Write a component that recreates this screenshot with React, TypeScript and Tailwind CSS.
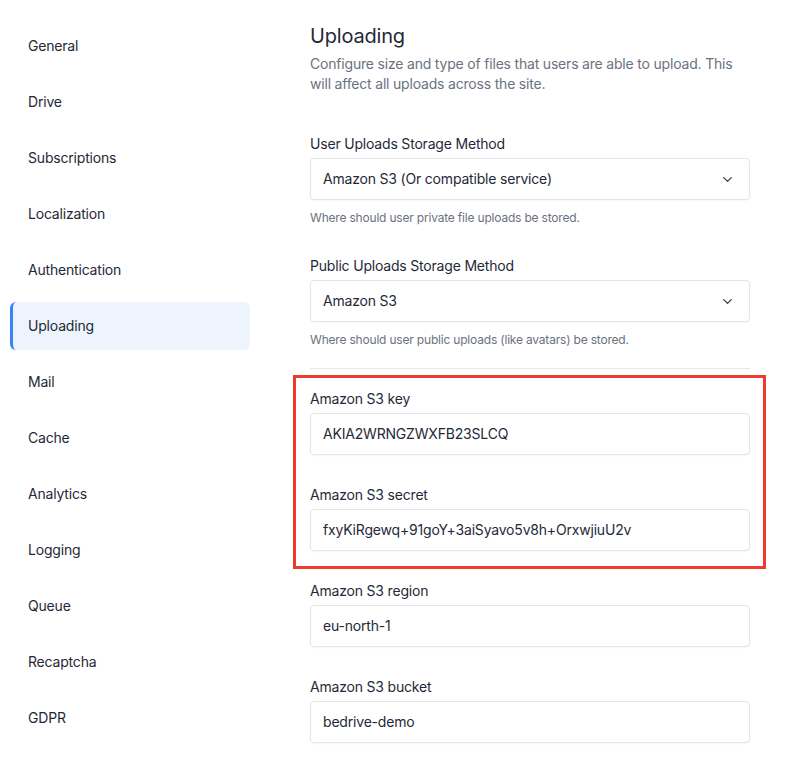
import React from "react";

const nav = ["General","Drive","Subscriptions","Localization","Authentication","Uploading","Mail","Cache","Analytics","Logging","Queue","Recaptcha","GDPR"];

function Chevron() {
  return (
    <svg width="15" height="15" viewBox="0 0 24 24" fill="none" stroke="#374151" strokeWidth="2.2" strokeLinecap="round" strokeLinejoin="round">
      <path d="M6 9l6 6 6-6" />
    </svg>
  );
}

function Select({ label, value, help, mt }: { label: string; value: string; help: string; mt: string }) {
  return (
    <div className={mt}>
      <div className="text-sm leading-5 text-[#1f2937]">{label}</div>
      <div className="mt-1 h-[42px] flex items-center justify-between rounded-[4px] border border-[#e3e5e8] bg-white pl-[12px] pr-[14px] shadow-[0_1px_2px_rgba(0,0,0,0.04)]">
        <span className="text-sm text-[#1f2937]">{value}</span>
        <Chevron />
      </div>
      <div className="mt-[10px] text-xs leading-4 text-[#6b7280]">{help}</div>
    </div>
  );
}

function Input({ label, value, mt }: { label: string; value: string; mt: string }) {
  return (
    <div className={mt}>
      <div className="text-sm leading-5 text-[#1f2937]">{label}</div>
      <div className="mt-1 h-[42px] flex items-center rounded-[4px] border border-[#e3e5e8] bg-white pl-[12px] shadow-[0_1px_2px_rgba(0,0,0,0.04)]">
        <span className="text-sm text-[#1f2937]">{value}</span>
      </div>
    </div>
  );
}

export default function App() {
  return (
    <div className="relative w-[793px] h-[758px] bg-white overflow-hidden tracking-[-0.012em]" style={{ fontFamily: "Inter, 'Noto Sans', sans-serif" }}>
      <div className="flex">
        <div className="w-[250px] pl-[10px] pt-[22px] flex flex-col gap-2">
          {nav.map((n) => (
            <div
              key={n}
              className={
                n === "Uploading"
                  ? "h-12 flex items-center rounded-md bg-[#eef4fe] border-l-[3px] border-[#3b82f6] pl-[15px] text-sm text-[#1f2937]"
                  : "h-12 flex items-center pl-[18px] text-sm text-[#1f2937]"
              }
            >
              {n}
            </div>
          ))}
        </div>
        <div className="ml-[60px] w-[440px] pt-[22px]">
          <div className="text-xl leading-7 text-[#1f2937]">Uploading</div>
          <div className="mt-1 text-sm leading-5 text-[#6b7280]">
            Configure size and type of files that users are able to upload. This will affect all uploads across the site.
          </div>
          <Select mt="mt-10" label="User Uploads Storage Method" value="Amazon S3 (Or compatible service)" help="Where should user private file uploads be stored." />
          <Select mt="mt-[30px]" label="Public Uploads Storage Method" value="Amazon S3" help="Where should user public uploads (like avatars) be stored." />
          <div className="mt-[20px] h-px bg-[#e5e7eb]" />
          <Input mt="mt-[20px]" label="Amazon S3 key" value="AKIA2WRNGZWXFB23SLCQ" />
          <Input mt="mt-[30px]" label="Amazon S3 secret" value="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" />
          <Input mt="mt-[30px]" label="Amazon S3 region" value="eu-north-1" />
          <Input mt="mt-[30px]" label="Amazon S3 bucket" value="bedrive-demo" />
        </div>
      </div>
      <div className="absolute left-[293px] top-[375px] w-[473px] h-[194px] border-[3px] border-[#ef3b2d] pointer-events-none" />
    </div>
  );
}
